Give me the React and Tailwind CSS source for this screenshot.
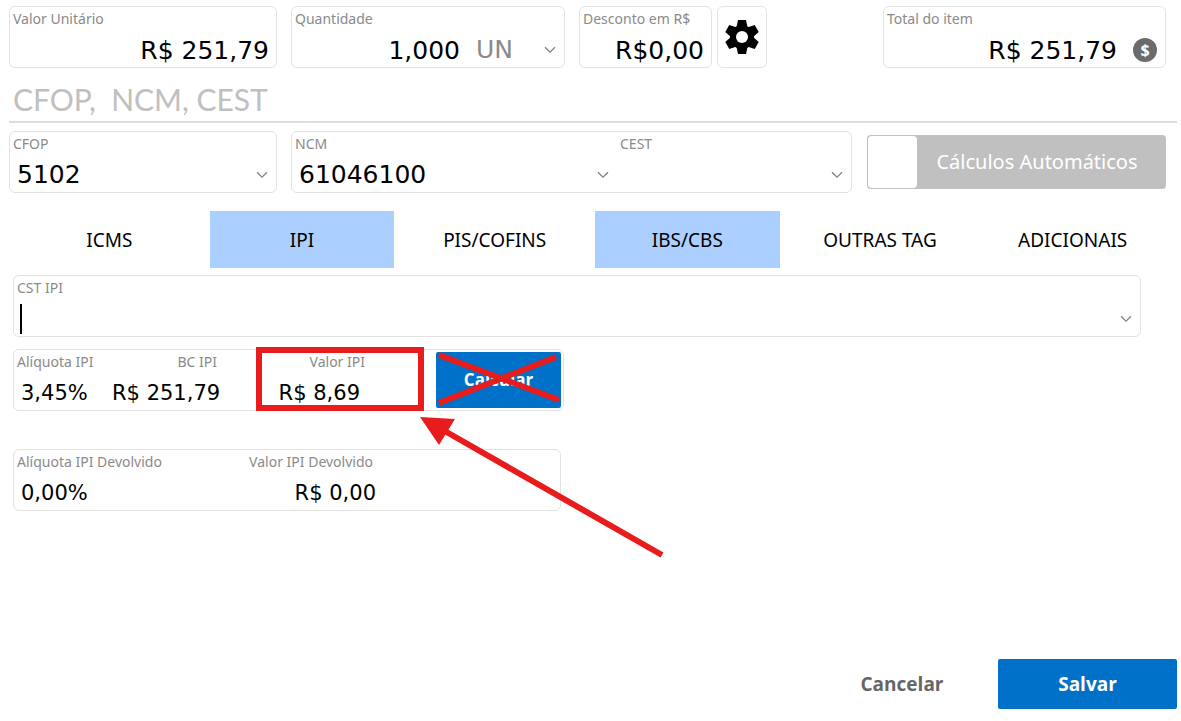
/**
 * Item tax form: values, fiscal codes and the IPI tab
 */

import React, { useId, useState } from 'react';
import { clsx } from 'clsx';

const TABS = ['ICMS', 'IPI', 'PIS/COFINS', 'IBS/CBS', 'OUTRAS TAG', 'ADICIONAIS'];
const HIGHLIGHTED = ['IPI', 'IBS/CBS'];

const Chevron = ({ className = '' }) => (
  <svg
    viewBox="0 0 12 8"
    className={clsx('pointer-events-none h-2 w-3 shrink-0', className)}
    fill="none"
    stroke="#808080"
    strokeWidth="1.3"
  >
    <path d="M1 1.2 L6 6.2 L11 1.2" />
  </svg>
);

const Gear = () => (
  <svg viewBox="-18 -18 36 36" className="size-9">
    {[0, 60, 120].map((angle) => (
      <path
        key={angle}
        transform={`rotate(${angle})`}
        d="M-4 -17 H4 L5.5 -10 V10 L4 17 H-4 L-5.5 10 V-10 Z"
      />
    ))}
    <circle r="12" />
    <circle r="6" fill="#fff" />
  </svg>
);

const Panel = ({ className = '', children }) => (
  <div className={clsx('flex h-[62px] rounded-md border border-[#e2e2e2]', className)}>
    {children}
  </div>
);

// Label on top, control below
const Field = ({ label, id, className = '', labelClass = '', children }) => (
  <div className={clsx('flex min-w-0 flex-col justify-between py-0.5', className)}>
    <label
      htmlFor={id}
      className={clsx("px-[3px] font-['Noto_Sans',sans-serif] text-[14px] leading-5 whitespace-nowrap text-[#8a8a8a]", labelClass)}
    >
      {label}
    </label>
    <div className="flex h-[30px] items-center">{children}</div>
  </div>
);

const TextField = ({ label, value, small, className, labelClass, inputClass = '', after }) => {
  const id = useId();
  return (
    <Field label={label} id={id} className={className} labelClass={labelClass}>
      <input
        id={id}
        type="text"
        defaultValue={value}
        className={clsx(
          'h-full w-full min-w-0 bg-transparent outline-none',
          small ? 'text-[21px]' : 'text-[25px]',
          inputClass
        )}
      />
      {after}
    </Field>
  );
};

const SelectField = ({ label, value, className }) => {
  const id = useId();
  return (
    <Field label={label} id={id} className={className}>
      <select
        id={id}
        defaultValue={value}
        className="h-full w-full min-w-0 appearance-none bg-transparent pl-[7px] text-[25px] leading-[30px] outline-none"
      >
        <option value={value}>{value}</option>
      </select>
      <Chevron className="mr-2" />
    </Field>
  );
};

const App = () => {
  const [tab, setTab] = useState('IPI');

  return (
    <main className="flex min-h-screen flex-col bg-white pt-1.5 pr-1 pb-3 pl-[9px] font-['DejaVu_Sans',sans-serif] text-black">
      {/* Values */}
      <div className="flex pr-[11px]">
        <Panel className="w-[268px]">
          <TextField label="Valor Unitário" value="R$ 251,79" className="flex-1" inputClass="pr-[7px] text-right" />
        </Panel>
        <Panel className="ml-[14px] w-[274px]">
          <TextField
            label="Quantidade"
            value="1,000"
            className="flex-1"
            inputClass="flex-1 text-right"
            after={
              <>
                <select
                  aria-label="Unidade"
                  className="ml-4 h-full w-[68px] appearance-none bg-transparent text-[25px] leading-[30px] text-[#8a8a8a] outline-none"
                >
                  <option>UN</option>
                </select>
                <Chevron className="mr-2" />
              </>
            }
          />
        </Panel>
        <Panel className="ml-[14px] w-[133px]">
          <TextField label="Desconto em R$" value="R$0,00" className="flex-1" inputClass="pr-[7px] text-right" />
        </Panel>
        <button
          type="button"
          aria-label="Configurar desconto"
          className="ml-[5px] flex h-[62px] w-[50px] items-center justify-center rounded-md border border-[#e2e2e2]"
        >
          <Gear />
        </button>
        <Panel className="ml-auto w-[283px]">
          <TextField
            label="Total do item"
            value="R$ 251,79"
            className="flex-1"
            inputClass="pr-4 text-right"
            after={
              <span className="mr-2 flex size-6 shrink-0 items-center justify-center rounded-full bg-[#6b6b6b] font-['Noto_Sans',sans-serif] text-[16px] font-bold text-white">
                $
              </span>
            }
          />
        </Panel>
      </div>

      {/* Fiscal codes */}
      <h2 className="mt-[13px] border-b-2 border-[#dedede] pb-1 pl-1 font-[Lato,sans-serif] text-[30px] leading-9 whitespace-pre text-[#c0c0c0]">
        CFOP,  NCM, CEST
      </h2>
      <div className="mt-2 flex items-center pr-[11px]">
        <Panel className="w-[268px]">
          <SelectField label="CFOP" value="5102" className="flex-1" />
        </Panel>
        <Panel className="ml-[14px] flex-1">
          <SelectField label="NCM" value="61046100" className="w-[325px]" />
          <SelectField label="CEST" value="" className="flex-1" />
        </Panel>
        <label className="ml-[15px] flex h-[54px] w-[299px] cursor-pointer items-center rounded bg-[#c0c0c0] p-px">
          <input type="checkbox" className="h-full w-[49px] appearance-none rounded bg-white outline-none" />
          <span className="flex-1 pr-2 text-center font-['Noto_Sans',sans-serif] text-[20px] text-white">
            Cálculos Automáticos
          </span>
        </label>
      </div>

      {/* Tabs */}
      <div role="tablist" className="mt-[18px] grid grid-cols-6 gap-2 pr-3 pl-2">
        {TABS.map((name) => (
          <button
            key={name}
            type="button"
            role="tab"
            aria-selected={tab === name}
            onClick={() => setTab(name)}
            className={clsx(
              "h-[57px] pt-0.5 font-['Noto_Sans',sans-serif] text-[19px]",
              HIGHLIGHTED.includes(name) && 'bg-[#abcfff]'
            )}
          >
            {name}
          </button>
        ))}
      </div>

      {/* IPI */}
      <section className="mt-[7px] pr-9 pl-1">
        <Panel className="relative">
          <SelectField label="CST IPI" value="" className="flex-1" />
          <span className="absolute top-7 left-1.5 h-[30px] w-0.5 bg-black" />
        </Panel>

        <div className="relative mt-3 w-[551px]">
          <Panel>
            <TextField small label="Alíquota IPI" value="3,45%" className="w-[98px]" inputClass="pl-[7px]" />
            <TextField small label="BC IPI" value="R$ 251,79" className="w-[108px]" labelClass="text-right" inputClass="text-right" />
            <TextField small label="Valor IPI" value="R$ 8,69" className="w-[148px]" labelClass="text-right" inputClass="pr-2 text-right" />
            <button
              type="button"
              className="my-auto mr-0.5 ml-auto h-14 w-[125px] rounded-xs bg-[#0071c8] font-['Open_Sans',sans-serif] text-[17px] font-bold text-white"
            >
              Calcular
            </button>
          </Panel>

          {/* Marks over the form */}
          <div className="pointer-events-none absolute -top-0.5 left-[243px] h-16 w-[168px] border-6 border-[#e81c1c]" />
          <svg
            viewBox="0 0 660 220"
            className="pointer-events-none absolute top-0 left-0 h-[220px] w-[660px]"
            stroke="#e81c1c"
            strokeWidth="6"
          >
            <path d="M426 6 L546 51" />
            <path d="M426 54 L543 8" />
            <path d="M430 81 L649 206" />
            <path d="M407 68 L442 70 L426 96 Z" fill="#e81c1c" stroke="none" />
          </svg>
        </div>

        <Panel className="mt-[38px] w-[548px]">
          <TextField small label="Alíquota IPI Devolvido" value="0,00%" className="w-[208px]" inputClass="pl-[7px]" />
          <TextField small label="Valor IPI Devolvido" value="R$ 0,00" className="w-[154px]" labelClass="text-right" inputClass="text-right" />
        </Panel>
      </section>

      {/* Actions */}
      <div className="mt-auto flex justify-end gap-3 font-['Open_Sans',sans-serif] text-[19px] font-bold">
        <button type="button" className="h-[50px] w-[168px] text-[#666666]">
          Cancelar
        </button>
        <button type="button" className="h-[50px] w-[179px] rounded-xs bg-[#0071c8] text-white">
          Salvar
        </button>
      </div>
    </main>
  );
};

export default App;
